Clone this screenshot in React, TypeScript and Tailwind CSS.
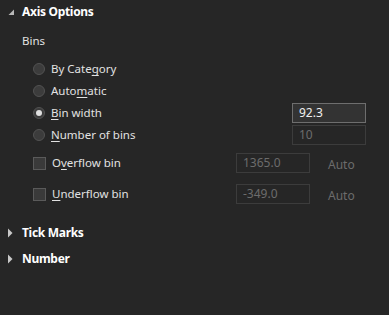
const FONT = { fontFamily: '"Segoe UI", "Noto Sans", "Open Sans", sans-serif' };

function Key({ children }: { children: string }) {
  return <span className="underline underline-offset-2 decoration-1">{children}</span>;
}

function Radio({ checked }: { checked?: boolean }) {
  return (
    <span className="flex h-[12px] w-[12px] shrink-0 items-center justify-center rounded-full border border-[#525252] bg-[#3c3c3c]">
      {checked && <span className="h-[6px] w-[6px] rounded-full bg-[#e0e0e0]" />}
    </span>
  );
}

function Check() {
  return <span className="block h-[13px] w-[13px] shrink-0 border border-[#5a5a5a] bg-[#3a3a3a]" />;
}

function Caret({ open }: { open?: boolean }) {
  if (open) {
    return (
      <svg width="7" height="7" viewBox="0 0 7 7" className="shrink-0">
        <path d="M6 0.5 L6 6 L0.5 6 Z" fill="#b8b8b8" />
      </svg>
    );
  }
  return (
    <svg width="5" height="10" viewBox="0 0 5 10" className="shrink-0">
      <path d="M0 0.5 L4.5 5 L0 9.5 Z" fill="#c8c8c8" />
    </svg>
  );
}

function Box({ value, active }: { value: string; active?: boolean }) {
  return (
    <div
      className={`flex h-[20px] w-[74px] items-center px-[6px] text-[12px] ${
        active ? "border border-[#6e6e6e] bg-[#333333] text-[#f0f0f0]" : "border border-[#3c3c3c] bg-[#262626] text-[#6c6c6c]"
      }`}
    >
      {value}
    </div>
  );
}

export default function App() {
  return (
    <div className="h-[315px] w-[389px] overflow-hidden bg-[#262626] text-[11.5px] text-[#e2e2e2]" style={FONT}>
      <div className="flex h-[24px] items-center pl-[8px]">
        <Caret open />
        <span className="ml-[7px] text-[12px] font-bold tracking-[-0.3px] text-white">Axis Options</span>
      </div>

      <div className="flex h-[33px] items-center pl-[22px] pt-[1px]">Bins</div>

      <div className="pl-[33px] pr-[23px] pt-[1px]">
        <div className="flex h-[22px] items-center gap-[6px]">
          <Radio />
          <span>By Cate<Key>g</Key>ory</span>
        </div>
        <div className="flex h-[21px] items-center gap-[6px]">
          <Radio />
          <span>Auto<Key>m</Key>atic</span>
        </div>
        <div className="flex h-[23px] items-center gap-[6px]">
          <Radio checked />
          <span className="flex-1"><Key>B</Key>in width</span>
          <Box value="92.3" active />
        </div>
        <div className="flex h-[21px] items-center gap-[6px]">
          <Radio />
          <span className="flex-1"><Key>N</Key>umber of bins</span>
          <Box value="10" />
        </div>
        <div className="mt-[7px] flex h-[22px] items-center gap-[6px]">
          <Check />
          <span className="flex-1">O<Key>v</Key>erflow bin</span>
          <Box value="1365.0" />
          <span className="w-[50px] pl-[12px] pt-[3px] text-[12px] text-[#6c6c6c]">Auto</span>
        </div>
        <div className="mt-[9px] flex h-[22px] items-center gap-[6px]">
          <Check />
          <span className="flex-1"><Key>U</Key>nderflow bin</span>
          <Box value="-349.0" />
          <span className="w-[50px] pl-[12px] pt-[3px] text-[12px] text-[#6c6c6c]">Auto</span>
        </div>
      </div>

      <div className="mt-[15px] flex h-[26px] items-center pl-[8px]">
        <Caret />
        <span className="ml-[9px] text-[12px] font-bold tracking-[-0.3px] text-white">Tick Marks</span>
      </div>
      <div className="flex h-[26px] items-center pl-[8px]">
        <Caret />
        <span className="ml-[9px] text-[12px] font-bold tracking-[-0.3px] text-white">Number</span>
      </div>
    </div>
  );
}
